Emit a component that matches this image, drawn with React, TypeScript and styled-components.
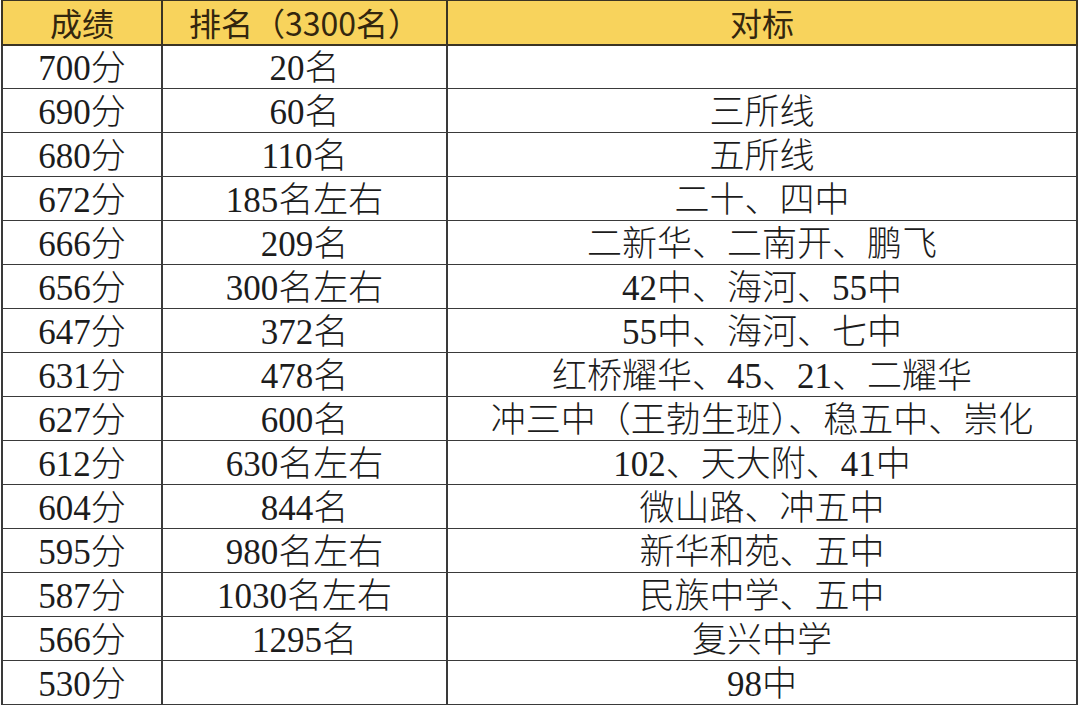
import styled, { createGlobalStyle } from 'styled-components';

const GlobalStyle = createGlobalStyle`
  html, body {
    margin: 0;
    padding: 0;
    background: #ffffff;
  }
`;

type Row = { score: string; rank: string; target: string };

const rows: Row[] = [
  { score: '700分', rank: '20名', target: '' },
  { score: '690分', rank: '60名', target: '三所线' },
  { score: '680分', rank: '110名', target: '五所线' },
  { score: '672分', rank: '185名左右', target: '二十、四中' },
  { score: '666分', rank: '209名', target: '二新华、二南开、鹏飞' },
  { score: '656分', rank: '300名左右', target: '42中、海河、55中' },
  { score: '647分', rank: '372名', target: '55中、海河、七中' },
  { score: '631分', rank: '478名', target: '红桥耀华、45、21、二耀华' },
  { score: '627分', rank: '600名', target: '冲三中（王勃生班）、稳五中、崇化' },
  { score: '612分', rank: '630名左右', target: '102、天大附、41中' },
  { score: '604分', rank: '844名', target: '微山路、冲五中' },
  { score: '595分', rank: '980名左右', target: '新华和苑、五中' },
  { score: '587分', rank: '1030名左右', target: '民族中学、五中' },
  { score: '566分', rank: '1295名', target: '复兴中学' },
  { score: '530分', rank: '', target: '98中' },
];

export default function App() {
  return (
    <>
      <GlobalStyle />
      <S.Page>
        <S.Table>
          <colgroup>
            <col style={{ width: 160 }} />
            <col style={{ width: 285 }} />
            <col />
          </colgroup>
          <thead>
            <tr>
              <S.HeadCell>成绩</S.HeadCell>
              <S.HeadCell $shift={-6}>排名（3300名）</S.HeadCell>
              <S.HeadCell>对标</S.HeadCell>
            </tr>
          </thead>
          <tbody>
            {rows.map((row) => (
              <tr key={row.score}>
                <S.Cell>{row.score}</S.Cell>
                <S.Cell>{row.rank}</S.Cell>
                <S.Cell>{row.target}</S.Cell>
              </tr>
            ))}
          </tbody>
        </S.Table>
      </S.Page>
    </>
  );
}

const S = {
  Page: styled.div`
    width: 1080px;
    height: 705px;
    overflow: hidden;
    padding: 0 2px 0 1px;
    box-sizing: border-box;
  `,

  Table: styled.table`
    width: 1077px;
    border-collapse: collapse;
    table-layout: fixed;
    color: #1c1c1c;
  `,

  HeadCell: styled.th<{ $shift?: number }>`
    height: 44px;
    padding: 0 0 0 ${({ $shift }) => ($shift ? `${$shift * 2}px` : '0')};
    box-sizing: border-box;
    background: #f8d35c;
    border: 2px solid #3b3424;
    border-top-width: 1px;
    color: #33260e;
    font-family: 'Noto Sans CJK SC', sans-serif;
    font-size: 32px;
    font-weight: 400;
    line-height: 40px;
    text-align: center;
    vertical-align: middle;
  `,

  Cell: styled.td`
    height: 44px;
    padding: 4px 0 0;
    box-sizing: border-box;
    border: 2px solid #3a3a3a;
    border-top-width: 1.5px;
    border-bottom-width: 1.5px;
    font-family: 'Liberation Serif', 'Noto Sans CJK SC', serif;
    font-size: 35px;
    font-weight: 300;
    line-height: 38px;
    text-align: center;
    vertical-align: middle;
    white-space: nowrap;
  `,
};
